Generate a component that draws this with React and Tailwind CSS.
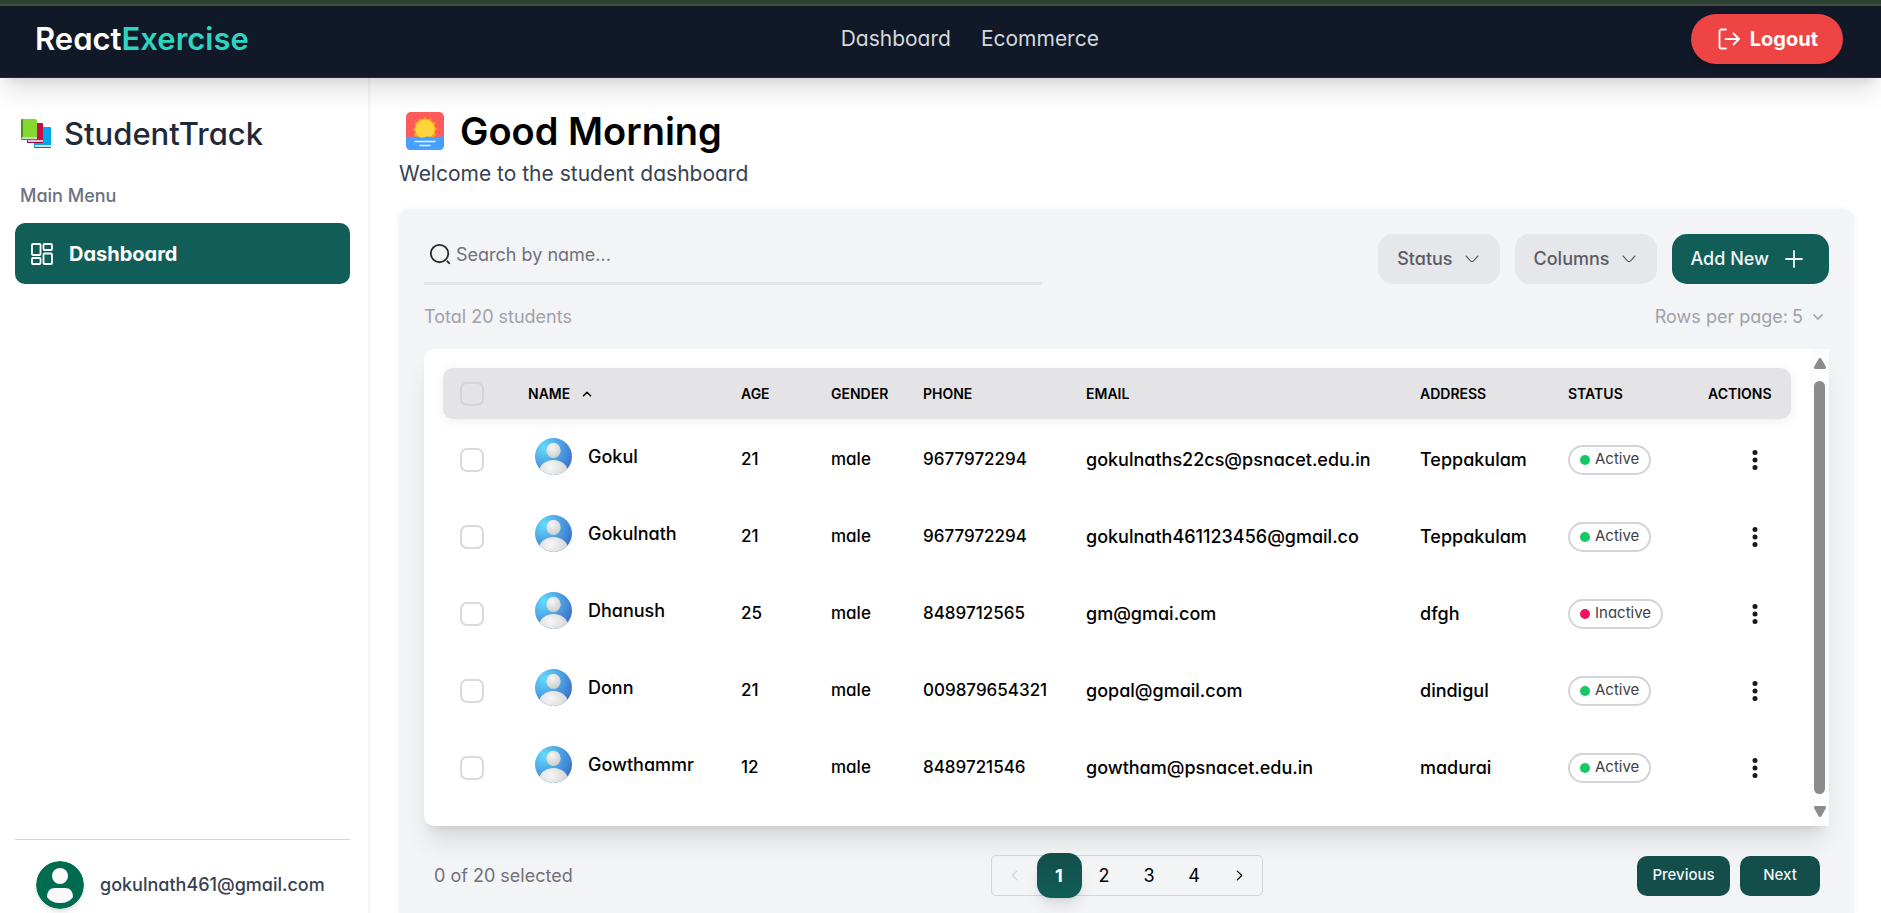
import React from "react";

const students = [
  { name: "Gokul", age: 21, gender: "male", phone: "9677972294", email: "gokulnaths22cs@psnacet.edu.in", address: "Teppakulam", status: "Active" },
  { name: "Gokulnath", age: 21, gender: "male", phone: "9677972294", email: "gokulnath461123456@gmail.co", address: "Teppakulam", status: "Active" },
  { name: "Dhanush", age: 25, gender: "male", phone: "8489712565", email: "gm@gmai.com", address: "dfgh", status: "Inactive" },
  { name: "Donn", age: 21, gender: "male", phone: "009879654321", email: "gopal@gmail.com", address: "dindigul", status: "Active" },
  { name: "Gowthammr", age: 12, gender: "male", phone: "8489721546", email: "gowtham@psnacet.edu.in", address: "madurai", status: "Active" },
];

function Stroke({ className, d, width = 1.5, box = "0 0 24 24" }) {
  return (
    <svg className={className} viewBox={box} fill="none" stroke="currentColor" strokeWidth={width} strokeLinecap="round" strokeLinejoin="round" aria-hidden="true">
      <path d={d} />
    </svg>
  );
}

function BooksIcon() {
  return (
    <svg className="h-8 w-8 shrink-0" viewBox="0 0 32 32" aria-hidden="true">
      <path d="M15 9h15a1 1 0 0 1 1 1v19H14V10z" fill="#00a6ed" />
      <path d="M15 27h16v2H15z" fill="#d3e3f1" />
      <path d="M14 29h17v1H15a1 1 0 0 1-1-1z" fill="#0074ba" />
      <path d="M8 5h14a1 1 0 0 1 1 1v19H7V6z" fill="#ca0b4a" />
      <path d="M8 22h15v2H8z" fill="#e6c3d2" />
      <path d="M7 24h16v1H8a1 1 0 0 1-1-1z" fill="#990838" />
      <path d="M2 1h13q2 0 2 2v19H1V2q0-1 1-1z" fill="#86d72f" />
      <path d="M1 2q0-1 2-1v19H1z" fill="#44911b" />
      <path d="M2 19h15v2H2z" fill="#c8dcc0" />
      <path d="M1 21h16v1H2a1 1 0 0 1-1-1z" fill="#44911b" />
    </svg>
  );
}

function SunriseIcon() {
  return (
    <svg className="h-[38px] w-[38px] shrink-0" viewBox="0 0 38 38" aria-hidden="true">
      <rect width="38" height="38" rx="5" fill="#ff5c59" />
      <path d="M19 5l2.5 2.5 3.4-1 1 3.4 3.5.9-.9 3.4L31 17l-2.2 2.8 1.2 3.5-3 2.7H11l-3-2.7 1.2-3.5L7 17l2.5-2.8-.9-3.4 3.5-.9 1-3.4 3.4 1z" fill="#f9a51f" />
      <circle cx="19" cy="17" r="9.5" fill="#ffd43b" />
      <path d="M0 24.5q3 1.5 6 .5t7 0 6 0 7 0 6 0 6-.5V33q0 5-5 5H5q-5 0-5-5z" fill="#479fff" />
      <path d="M9 29.5h20M14 33.5h10" stroke="#e3f2ff" strokeWidth="1.4" strokeLinecap="round" />
    </svg>
  );
}

function Avatar() {
  return (
    <svg className="h-[37px] w-[37px] shrink-0" viewBox="0 0 37 37" aria-hidden="true">
      <defs>
        <radialGradient id="avatarSky" cx="0.25" cy="0.25" r="0.85">
          <stop offset="0" stopColor="#62dcfd" />
          <stop offset="1" stopColor="#3a6fcb" />
        </radialGradient>
        <radialGradient id="avatarSkin" cx="0.4" cy="0.3" r="0.8">
          <stop offset="0" stopColor="#f7f7f7" />
          <stop offset="1" stopColor="#c9c9c9" />
        </radialGradient>
        <clipPath id="avatarClip"><circle cx="18.500" cy="18.500" r="18.500" /></clipPath>
      </defs>
      <g clipPath="url(#avatarClip)">
        <rect width="37" height="37" fill="url(#avatarSky)" />
        <ellipse cx="18.500" cy="12.300" rx="7.200" ry="7.600" fill="url(#avatarSkin)" />
        <ellipse cx="18.500" cy="34" rx="14.500" ry="12" fill="url(#avatarSkin)" />
      </g>
    </svg>
  );
}

function Check({ label, header = false }) {
  return (
    <input
      type="checkbox"
      aria-label={label}
      className={`block h-6 w-6 cursor-pointer appearance-none rounded-[7px] border-2 checked:bg-[#115e59] ${header ? "border-[#d4d4d8]" : "border-[#d9d9de] bg-white"}`}
    />
  );
}

const CHEVRON = "M6 9l6 6 6-6";

export default function App() {
  return (
    <div className="flex min-h-screen flex-col bg-white font-['Inter','Liberation_Sans',sans-serif] text-black [font-feature-settings:'cv11']">
      <header className="relative z-10 border-t-4 border-[#2b4234] shadow-xl">
        <div className="h-[2px] bg-[#464b42]" />
        <div className="flex h-[72px] items-center justify-between border-b border-[#1f2937] bg-[#111827] pr-[38px] pb-[6px] pl-[35px]">
          <a href="#home" className="text-[31px] leading-10 font-semibold text-white">
            React<span className="text-[#2dd4bf]">Exercise</span>
          </a>
          <nav className="flex gap-[30px] text-[21px] text-[#d5d8dd]">
            <a href="#dashboard">Dashboard</a>
            <a href="#ecommerce">Ecommerce</a>
          </nav>
          <button type="button" className="flex h-[50px] items-center gap-2.5 rounded-full bg-[#ef4444] px-[25px] text-xl font-bold text-white shadow-md">
            <Stroke className="h-6 w-6" width={1.8} d="M10 2.500H5.500a2 2 0 0 0-2 2v15a2 2 0 0 0 2 2H10M9.500 12H22.500M17.500 6.500l5.500 5.500-5.500 5.500" />
            Logout
          </button>
        </div>
      </header>

      <div className="flex flex-1">
        <aside className="flex w-[369px] shrink-0 flex-col border-r border-[#f3f4f6] pt-[33px] pr-[18px] pl-[15px] shadow-sm">
          <div className="flex items-center gap-3 pl-[5px] text-[#1f2937]">
            <BooksIcon />
            <span className="text-[31px] leading-[46px] font-medium">StudentTrack</span>
          </div>
          <p className="mt-[24px] pl-[5px] text-lg leading-[30px] font-medium text-[#6b7280]">Main Menu</p>
          <a href="#dashboard" className="mt-[12px] flex h-[61px] items-center gap-[14px] rounded-[10px] bg-[#115e59] pl-[14px] text-xl font-bold text-white">
            <svg className="h-[26px] w-[26px]" viewBox="0 0 26 26" fill="none" stroke="currentColor" strokeWidth="1.8" strokeLinejoin="round" aria-hidden="true">
              <rect x="3" y="3" width="8.500" height="11" rx="1" />
              <rect x="14.500" y="3" width="8.500" height="6" rx="1" />
              <rect x="3" y="17" width="8.500" height="6" rx="1" />
              <rect x="14.500" y="12.500" width="8.500" height="10.500" rx="1" />
            </svg>
            Dashboard
          </a>
          <div className="mt-auto flex h-[74px] items-start gap-[16px] border-t border-[#d4d4dc] pt-[21px] pl-[21px]">
            <svg className="h-12 w-12 shrink-0 rounded-full shadow-md" viewBox="0 0 48 48" aria-hidden="true">
              <circle cx="24" cy="24" r="24" fill="#006c4f" />
              <circle cx="24" cy="15" r="8" fill="#fafafa" />
              <path d="M11 36q0-9 8-9h10q8 0 8 9-4 6-13 6t-13-6z" fill="#fafafa" />
            </svg>
            <span className="text-lg leading-[47px] font-medium text-[#374151]">gokulnath461@gmail.com</span>
          </div>
        </aside>

        <main className="flex min-w-0 flex-1 flex-col pt-[26px] pr-[27px] pl-[30px]">
          <h1 className="flex items-center gap-4 pl-[7px] text-[38px] leading-[54px] font-semibold">
            <SunriseIcon />
            Good Morning
          </h1>
          <p className="mt-px text-[21px] leading-[30px] text-[#374151]">Welcome to the student dashboard</p>

          <section className="mt-[20px] flex-1 rounded-t-xl bg-[#f3f4f6] px-[25px] pt-[25px] pb-4 shadow-[0_0_6px_rgba(0,0,0,0.06)]">
            <div className="flex items-start justify-between">
              <label className="flex h-[51px] w-[44%] items-start gap-[5px] border-b-[3px] border-[#e4e4e7] pt-[5px] pl-[5px]">
                <Stroke className="mt-1 h-[22px] w-[22px] shrink-0 text-[#27272a]" width={2} d="M11.500 21a9.500 9.500 0 1 0 0-19 9.500 9.500 0 0 0 0 19zM22 22l-2-2" />
                <input type="text" aria-label="Search by name" placeholder="Search by name..." className="h-[30px] min-w-0 flex-1 bg-transparent text-lg outline-none placeholder:text-[#71717a]" />
              </label>
              <div className="flex gap-[15px] text-lg font-medium text-[#5b5c62]">
                <button type="button" className="flex h-[50px] items-center gap-2.5 rounded-[15px] bg-[#e5e7eb] px-[19px]">
                  Status
                  <Stroke className="h-[18px] w-[18px]" d="M4 8l6 6.500q2 2 4 0L20 8" />
                </button>
                <button type="button" className="flex h-[50px] items-center gap-2.5 rounded-[15px] bg-[#e5e7eb] px-[19px]">
                  Columns
                  <Stroke className="h-[18px] w-[18px]" d="M4 8l6 6.500q2 2 4 0L20 8" />
                </button>
                <button type="button" className="flex h-[50px] items-center gap-[13px] rounded-[15px] bg-[#115e59] pr-[23px] pl-[19px] text-[#f3f4f6]">
                  Add New
                  <Stroke className="h-6 w-6" width={1.8} d="M4 12h16M12 4v16" />
                </button>
              </div>
            </div>

            <div className="mt-[16px] flex h-8 items-center justify-between text-lg text-[#a1a1aa]">
              <span>Total 20 students</span>
              <label className="flex items-center gap-1 pr-[3px]">
                Rows per page:
                <span className="flex items-center">
                  <select defaultValue="5" className="w-[18px] appearance-none bg-transparent outline-none">
                    <option>5</option>
                    <option>10</option>
                    <option>15</option>
                  </select>
                  <Stroke className="h-4 w-4" width={2.6} d={CHEVRON} />
                </span>
              </label>
            </div>

            <div className="mt-[16px] flex h-[477px] rounded-l-[10px] bg-white shadow-xl">
              <div className="min-w-0 flex-1 p-[19px]">
                <table className="w-full table-fixed border-separate border-spacing-0 text-left">
                  <colgroup>
                    <col className="w-[67px]" />
                    <col className="w-[213px]" />
                    <col className="w-[90px]" />
                    <col className="w-[92px]" />
                    <col className="w-[163px]" />
                    <col />
                    <col className="w-[148px]" />
                    <col className="w-[140px]" />
                    <col className="w-[101px]" />
                  </colgroup>
                  <thead className="rounded-[10px] shadow-[0_2px_12px_rgba(0,0,0,0.07)]">
                    <tr className="h-[51px] text-[14px] font-semibold [&>th]:bg-[#e4e4e6] [&>th]:pl-[18px] [&>th]:font-semibold [&>th:first-child]:pl-[17px]">
                      <th scope="col" className="rounded-l-[10px]"><Check header label="Select all students" /></th>
                      <th scope="col">
                        <button type="button" className="flex items-center gap-2.5">
                          NAME
                          <Stroke className="h-3.5 w-3.5" width={2.6} d="M6 15l6-6 6 6" />
                        </button>
                      </th>
                      <th scope="col">AGE</th>
                      <th scope="col">GENDER</th>
                      <th scope="col">PHONE</th>
                      <th scope="col">EMAIL</th>
                      <th scope="col">ADDRESS</th>
                      <th scope="col">STATUS</th>
                      <th scope="col" className="rounded-r-[10px]">ACTIONS</th>
                    </tr>
                  </thead>
                  <tbody className="text-[17px] font-medium [&_td]:pl-[18px] [&_td:first-child]:pl-[17px]">
                    <tr className="h-[2px]" aria-hidden="true"><td colSpan={9} /></tr>
                    {students.map((s) => (
                      <tr key={s.name} className="h-[77px]">
                        <td><Check label={`Select ${s.name}`} /></td>
                        <td>
                          <div className="flex items-center gap-4 pb-[6px] pl-[7px] text-lg">
                            <Avatar />
                            {s.name}
                          </div>
                        </td>
                        <td>{s.age}</td>
                        <td>{s.gender}</td>
                        <td>{s.phone}</td>
                        <td className="text-lg">{s.email}</td>
                        <td className="text-lg">{s.address}</td>
                        <td>
                          <span className="inline-flex h-[30px] items-center gap-[5px] rounded-full border-2 border-[#d4d4d8] px-2.5 align-middle text-[15px] font-normal text-[#3f3f46]">
                            <span className={`h-2.5 w-2.5 rounded-full ${s.status === "Active" ? "bg-[#17c964]" : "bg-[#f31260]"}`} />
                            {s.status}
                          </span>
                        </td>
                        <td>
                          <button type="button" aria-label={`Actions for ${s.name}`} className="ml-[35px] block">
                            <svg className="h-6 w-6" viewBox="0 0 24 24" fill="#18181b" aria-hidden="true">
                              <circle cx="12" cy="4.500" r="2.500" />
                              <circle cx="12" cy="12" r="2.500" />
                              <circle cx="12" cy="19.500" r="2.500" />
                            </svg>
                          </button>
                        </td>
                      </tr>
                    ))}
                  </tbody>
                </table>
              </div>
              <div className="flex w-[19px] shrink-0 flex-col items-center gap-3 bg-[#fcfcfc] py-[9px]" aria-hidden="true">
                <svg className="h-[11px] w-3 shrink-0" viewBox="0 0 12 11" fill="#8b8b8b"><path d="M6 0q1 0 1.500 1L12 9q0 2-1 2H1q-1 0-1-2l4.500-8Q5 0 6 0z" /></svg>
                <div className="w-[11px] flex-1 rounded-full bg-[#8b8b8b]" />
                <svg className="h-[11px] w-3 shrink-0" viewBox="0 0 12 11" fill="#8b8b8b"><path d="M6 11q1 0 1.500-1L12 2q0-2-1-2H1Q0 0 0 2l4.500 8q.5 1 1.500 1z" /></svg>
              </div>
            </div>

            <div className="mt-[29px] flex items-center justify-between pr-[9px] pl-[10px]">
              <span className="w-[228px] text-lg text-[#71717a]">0 of 20 selected</span>
              <nav aria-label="Pagination" className="ml-[-46px] flex h-[41px] items-center rounded-[5px] border border-[#d4d4d8] text-lg [&>button]:h-[45px] [&>button]:w-[45px]">
                <button type="button" aria-label="Previous page" disabled className="text-[#d4d4d8]">
                  <Stroke className="mx-auto h-[15px] w-[15px]" d="M15.500 19l-7-7 7-7" width={2} />
                </button>
                <button type="button" aria-current="page" className="rounded-[14px] bg-linear-to-b from-[#134e4a] to-[#115e59] font-bold text-white shadow-lg">1</button>
                <button type="button">2</button>
                <button type="button">3</button>
                <button type="button">4</button>
                <button type="button" aria-label="Next page">
                  <Stroke className="mx-auto h-[15px] w-[15px]" d="M8.500 19l7-7-7-7" width={2} />
                </button>
              </nav>
              <div className="flex gap-2.5 text-[15px] font-medium text-[#f3f4f6]">
                <button type="button" className="h-10 w-[93px] rounded-[10px] bg-[#134e4a]">Previous</button>
                <button type="button" className="h-10 w-[80px] rounded-[10px] bg-[#134e4a]">Next</button>
              </div>
            </div>
          </section>
        </main>
      </div>
    </div>
  );
}
